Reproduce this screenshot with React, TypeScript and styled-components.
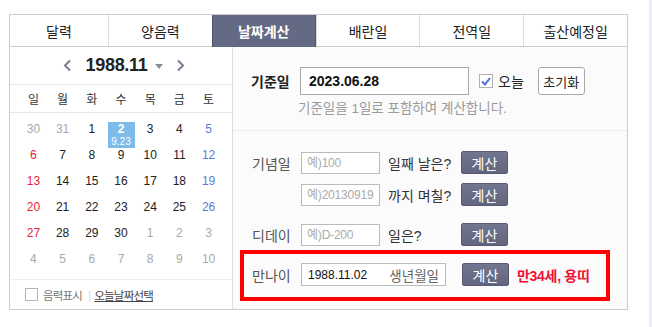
import styled, { createGlobalStyle } from "styled-components"

const GlobalStyle = createGlobalStyle`
    body {
        margin: 0;
        background: #ffffff;
        font-family: "Liberation Sans", "Noto Sans CJK KR", sans-serif;
        color: #222;
    }
    * { box-sizing: border-box; }
`

const Page = styled.div`
    display: flex;
    justify-content: space-between;
    height: 327px;
`

const Wrapper = styled.div`
    padding: 14px 0 0 9px;
`

const ScrollEdge = styled.div`
    width: 3px;
    height: 100%;
    background: #ededf3;
`

const Container = styled.div`
    width: 619px;
    border: 1px solid #cccccc;
    background: #ffffff;
`

const Tabs = styled.div`
    display: grid;
    grid-template-columns: 98px repeat(5, 1fr);
    height: 32px;
    border-bottom: 1px solid #cccccc;
`

const Tab = styled.div<{ $active?: boolean }>`
    display: flex;
    align-items: center;
    justify-content: center;
    font-size: 14px;
    color: ${p => (p.$active ? "#ffffff" : "#222222")};
    font-weight: ${p => (p.$active ? 700 : 400)};
    background: ${p => (p.$active ? "#646984" : "transparent")};
    border-left: 1px solid ${p => (p.$active ? "#4d526d" : "#dddddd")};
    border-right: ${p => (p.$active ? "1px solid #4d526d" : "none")};
    margin-bottom: ${p => (p.$active ? "-1px" : "0")};
    &:first-child { border-left: none; }
`

const Body = styled.div`
    display: flex;
    height: 262px;
`

const Calendar = styled.div`
    width: 223px;
    border-right: 1px solid #dddddd;
    display: flex;
    flex-direction: column;
`

const CalHeader = styled.div`
    height: 38px;
    border-bottom: 1px solid #e9e9e9;
    display: flex;
    align-items: center;
    justify-content: center;
    padding-left: 6px;
`

const NavButton = styled.span`
    display: flex;
`

const Title = styled.span`
    font-size: 18px;
    font-weight: 700;
    color: #222;
    margin: 0 8px 0 14px;
    letter-spacing: -0.3px;
`

const DropArrow = styled.span`
    width: 0;
    height: 0;
    border-left: 4.5px solid transparent;
    border-right: 4.5px solid transparent;
    border-top: 5px solid #878ca3;
    margin: 2px 13px 0 0;
`

const WeekRow = styled.div`
    height: 28px;
    border-bottom: 1px solid #e9e9e9;
    display: grid;
    grid-template-columns: repeat(7, 29.2px);
    justify-content: center;
    align-items: center;
`

const WeekName = styled.span`
    text-align: center;
    font-size: 12px;
    color: #333;
`

const DayGrid = styled.div`
    display: grid;
    grid-template-columns: repeat(7, 29.2px);
    grid-auto-rows: 26px;
    justify-content: center;
    padding-top: 9px;
    height: 166px;
`

const Day = styled.div<{ $tone: string; $selected?: boolean }>`
    justify-self: center;
    width: 27px;
    display: flex;
    flex-direction: column;
    align-items: center;
    font-size: 12px;
    line-height: 14px;
    color: ${p => (p.$selected ? "#ffffff" : p.$tone)};
    font-weight: ${p => (p.$selected ? 700 : 400)};
    background: ${p => (p.$selected ? "#7dbbe8" : "transparent")};
`

const Lunar = styled.span`
    font-size: 10px;
    line-height: 12px;
    font-weight: 400;
`

const CalFooter = styled.div`
    flex: 1;
    border-top: 1px solid #eeeeee;
    display: flex;
    align-items: center;
    padding-left: 15px;
    font-size: 11.5px;
    letter-spacing: -0.8px;
`

const Box = styled.span`
    width: 13px;
    height: 13px;
    border: 1px solid #b5b5b5;
    background: #fff;
    margin-right: 5px;
`

const FooterText = styled.span`
    color: #777;
`

const Divider = styled.span`
    color: #d5d5d5;
    margin: 0 4px 0 6px;
`

const FooterLink = styled.span`
    color: #444;
    text-decoration: underline;
`

const Panel = styled.div`
    flex: 1;
    background: #fbfbfb;
    display: flex;
    flex-direction: column;
`

const BaseSection = styled.div`
    height: 84px;
    border-bottom: 1px solid #ececec;
    padding: 20px 0 0 18px;
`

const Row = styled.div<{ $gap?: number }>`
    display: flex;
    align-items: center;
    margin-top: ${p => p.$gap ?? 0}px;
`

const Label = styled.span<{ $bold?: boolean }>`
    width: 49px;
    font-size: 14px;
    color: ${p => (p.$bold ? "#222" : "#555")};
    font-weight: ${p => (p.$bold ? 700 : 400)};
`

const BaseInput = styled.input`
    width: 169px;
    height: 28px;
    border: 1px solid #aaaaaa;
    background: #fff;
    padding: 0 8px;
    font-family: inherit;
    font-size: 14px;
    font-weight: 700;
    color: #111;
    outline: none;
`

const Check = styled.span`
    width: 14px;
    height: 14px;
    border: 1px solid #b0b0b0;
    background: #fff;
    display: flex;
    align-items: center;
    justify-content: center;
    margin: 0 5px 0 10px;
`

const CheckLabel = styled.span`
    font-size: 14px;
    color: #222;
`

const ResetButton = styled.button`
    margin-left: 14px;
    width: 47px;
    height: 28px;
    border: 1px solid #a8a8a8;
    border-radius: 3px;
    background: #ffffff;
    font-family: inherit;
    font-size: 13px;
    color: #222;
    padding: 0;
`

const Hint = styled.div`
    margin: 6px 0 0 47px;
    font-size: 13.5px;
    line-height: 15px;
    color: #9a9a9a;
`

const CalcSection = styled.div`
    padding: 20px 0 0 0;
`

const CalcRow = styled(Row)`
    padding-left: 19px;
`

const SmallInput = styled.input`
    width: 79px;
    height: 22px;
    border: 1px solid #bbbbbb;
    background: #fff;
    padding: 0 0 0 5px;
    font-family: inherit;
    font-size: 12px;
    letter-spacing: -0.2px;
    color: #111;
    outline: none;
    &::placeholder { color: #aaaaaa; }
`

const Suffix = styled.span`
    width: 81px;
    padding-left: 8px;
    font-size: 14px;
    color: #333;
`

const CalcButton = styled.button<{ $offset?: number }>`
    width: 47px;
    height: 23px;
    margin-left: ${p => p.$offset ?? 0}px;
    border: 1px solid #565a72;
    border-radius: 2px;
    background: linear-gradient(#72768f, #61657e);
    color: #ffffff;
    font-family: inherit;
    font-size: 14px;
    padding: 0;
`

const Highlight = styled.div`
    margin: 4px 0 0 7px;
    width: 370px;
    height: 51px;
    border: 4px solid #ff0000;
    padding: 9px 0 0 8px;
`

const AgeField = styled.div`
    width: 145px;
    height: 23px;
    border: 1px solid #bbbbbb;
    background: #fff;
    display: flex;
    align-items: center;
    padding: 0 6px;
    font-size: 12px;
    color: #111;
`

const AgeHint = styled.span`
    margin-left: auto;
    font-size: 13.5px;
    color: #666;
`

const Result = styled.span`
    margin-left: 8px;
    font-size: 14px;
    font-weight: 700;
    color: #ee1133;
    letter-spacing: -0.3px;
`

const Chevron = ({ dir }: { dir: "left" | "right" }) => (
    <svg width="9" height="13" viewBox="0 0 9 13">
        <polyline
            points={dir === "left" ? "7,1.5 2,6.5 7,11.5" : "2,1.5 7,6.5 2,11.5"}
            fill="none"
            stroke="#777c94"
            strokeWidth="2"
        />
    </svg>
)

const RED = "#e3263d"
const BLUE = "#5b7cd6"
const GRAY = "#a9a9a9"
const DARK = "#222"

type Cell = { d: number; out?: boolean; lunar?: string }

const weeks: Cell[][] = [
    [{ d: 30, out: true }, { d: 31, out: true }, { d: 1 }, { d: 2, lunar: "9.23" }, { d: 3 }, { d: 4 }, { d: 5 }],
    [{ d: 6 }, { d: 7 }, { d: 8 }, { d: 9 }, { d: 10 }, { d: 11 }, { d: 12 }],
    [{ d: 13 }, { d: 14 }, { d: 15 }, { d: 16 }, { d: 17 }, { d: 18 }, { d: 19 }],
    [{ d: 20 }, { d: 21 }, { d: 22 }, { d: 23 }, { d: 24 }, { d: 25 }, { d: 26 }],
    [{ d: 27 }, { d: 28 }, { d: 29 }, { d: 30 }, { d: 1, out: true }, { d: 2, out: true }, { d: 3, out: true }],
    [4, 5, 6, 7, 8, 9, 10].map(d => ({ d, out: true })),
]

function toneOf(cell: Cell, col: number) {
    if (cell.out) return GRAY
    if (col === 0) return RED
    if (col === 6) return BLUE
    return DARK
}

export default function App() {
    const tabs = ["달력", "양음력", "날짜계산", "배란일", "전역일", "출산예정일"]

    return (
        <>
            <GlobalStyle />
            <Page>
                <Wrapper>
                    <Container>
                        {/* 상단 탭 */}
                        <Tabs>
                            {tabs.map(t => (
                                <Tab key={t} $active={t === "날짜계산"}>{t}</Tab>
                            ))}
                        </Tabs>

                        <Body>
                            {/* 달력 */}
                            <Calendar>
                                <CalHeader>
                                    <NavButton><Chevron dir="left" /></NavButton>
                                    <Title>1988.11</Title>
                                    <DropArrow />
                                    <NavButton><Chevron dir="right" /></NavButton>
                                </CalHeader>
                                <WeekRow>
                                    {["일", "월", "화", "수", "목", "금", "토"].map(w => (
                                        <WeekName key={w}>{w}</WeekName>
                                    ))}
                                </WeekRow>
                                <DayGrid>
                                    {weeks.map((week, r) =>
                                        week.map((cell, c) => (
                                            <Day key={`${r}-${c}`} $tone={toneOf(cell, c)} $selected={!!cell.lunar}>
                                                {cell.d}
                                                {cell.lunar && <Lunar>{cell.lunar}</Lunar>}
                                            </Day>
                                        ))
                                    )}
                                </DayGrid>
                                <CalFooter>
                                    <Box />
                                    <FooterText>음력표시</FooterText>
                                    <Divider>|</Divider>
                                    <FooterLink>오늘날짜선택</FooterLink>
                                </CalFooter>
                            </Calendar>

                            {/* 날짜 계산 */}
                            <Panel>
                                <BaseSection>
                                    <Row>
                                        <Label $bold>기준일</Label>
                                        <BaseInput defaultValue="2023.06.28" />
                                        <Check>
                                            <svg width="10" height="9" viewBox="0 0 10 9">
                                                <polyline points="1,4.5 4,7.5 9,1" fill="none" stroke="#4b6fe0" strokeWidth="2" />
                                            </svg>
                                        </Check>
                                        <CheckLabel>오늘</CheckLabel>
                                        <ResetButton>초기화</ResetButton>
                                    </Row>
                                    <Hint>기준일을 1일로 포함하여 계산합니다.</Hint>
                                </BaseSection>

                                <CalcSection>
                                    <CalcRow>
                                        <Label>기념일</Label>
                                        <SmallInput placeholder="예)100" />
                                        <Suffix>일째 날은?</Suffix>
                                        <CalcButton>계산</CalcButton>
                                    </CalcRow>
                                    <CalcRow $gap={9}>
                                        <Label />
                                        <SmallInput placeholder="예)20130919" />
                                        <Suffix>까지 며칠?</Suffix>
                                        <CalcButton>계산</CalcButton>
                                    </CalcRow>
                                    <CalcRow $gap={17}>
                                        <Label>디데이</Label>
                                        <SmallInput placeholder="예)D-200" />
                                        <Suffix>일은?</Suffix>
                                        <CalcButton>계산</CalcButton>
                                    </CalcRow>
                                    <Highlight>
                                        <Row>
                                            <Label>만나이</Label>
                                            <AgeField>
                                                1988.11.02
                                                <AgeHint>생년월일</AgeHint>
                                            </AgeField>
                                            <CalcButton $offset={16}>계산</CalcButton>
                                            <Result>만34세, 용띠</Result>
                                        </Row>
                                    </Highlight>
                                </CalcSection>
                            </Panel>
                        </Body>
                    </Container>
                </Wrapper>
                <ScrollEdge />
            </Page>
        </>
    )
}
